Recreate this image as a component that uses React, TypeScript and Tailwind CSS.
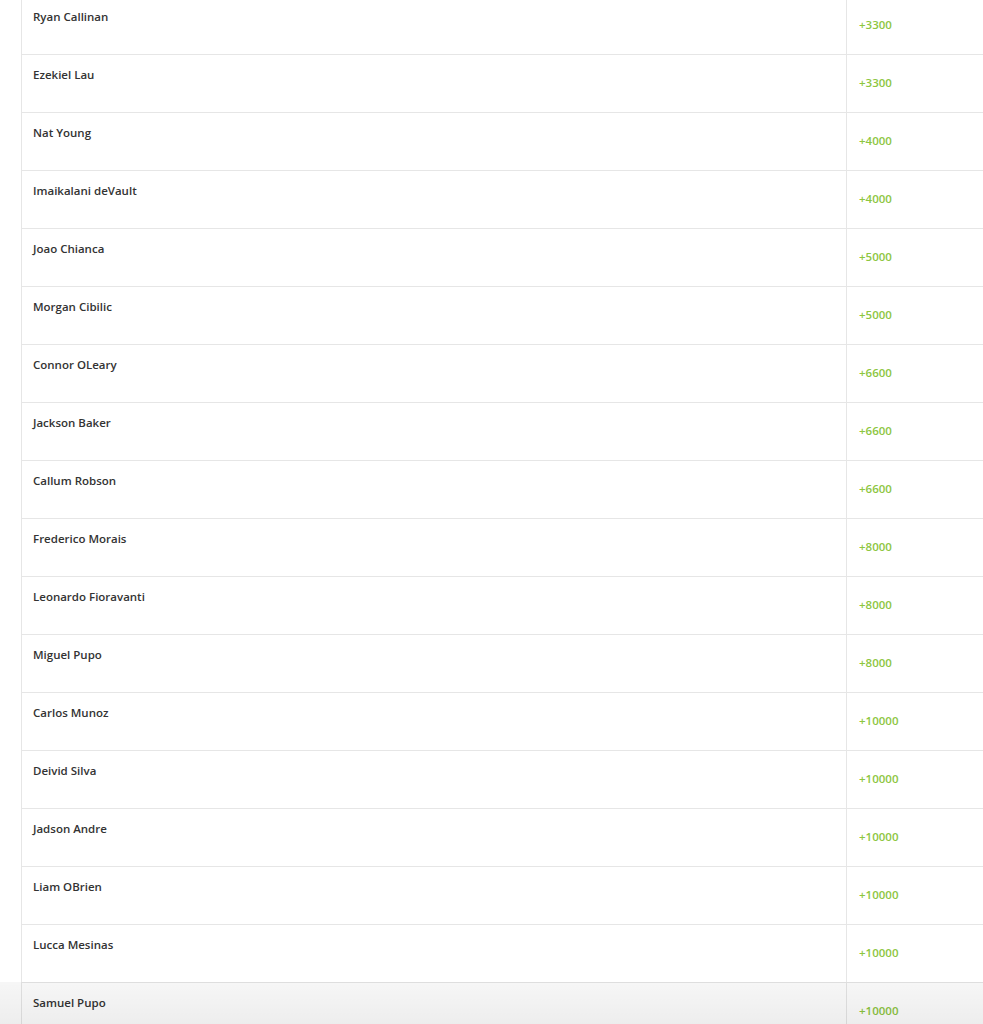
import React from "react";

const rows: [string, string][] = [
  ["Ryan Callinan", "+3300"],
  ["Ezekiel Lau", "+3300"],
  ["Nat Young", "+4000"],
  ["Imaikalani deVault", "+4000"],
  ["Joao Chianca", "+5000"],
  ["Morgan Cibilic", "+5000"],
  ["Connor OLeary", "+6600"],
  ["Jackson Baker", "+6600"],
  ["Callum Robson", "+6600"],
  ["Frederico Morais", "+8000"],
  ["Leonardo Fioravanti", "+8000"],
  ["Miguel Pupo", "+8000"],
  ["Carlos Munoz", "+10000"],
  ["Deivid Silva", "+10000"],
  ["Jadson Andre", "+10000"],
  ["Liam OBrien", "+10000"],
  ["Lucca Mesinas", "+10000"],
  ["Samuel Pupo", "+10000"],
];

export default function App() {
  return (
    <div
      className="relative h-[1024px] w-[983px] overflow-hidden bg-white"
      style={{ fontFamily: '"Open Sans", "Liberation Sans", sans-serif' }}
    >
      <div className="-mt-[3px] ml-[21px] w-[1100px] border-l border-[#e6e6e6]">
        {rows.map(([name, odds]) => (
          <div key={name} className="flex h-[58px] border-b border-[#e6e6e6]">
            <div className="w-[825px] shrink-0 border-r border-[#e6e6e6] pl-[11px] pt-[11px] text-[11.5px] font-semibold leading-[18px] text-[#333333]">
              {name}
            </div>
            <div className="flex flex-1 items-center pb-[2px] pl-[12px] text-[11.5px] font-semibold text-[#8dc63f]">
              {odds}
            </div>
          </div>
        ))}
      </div>
      <div className="pointer-events-none absolute bottom-0 left-0 h-[42px] w-full bg-gradient-to-b from-black/[0.035] to-black/[0.07]" />
    </div>
  );
}
